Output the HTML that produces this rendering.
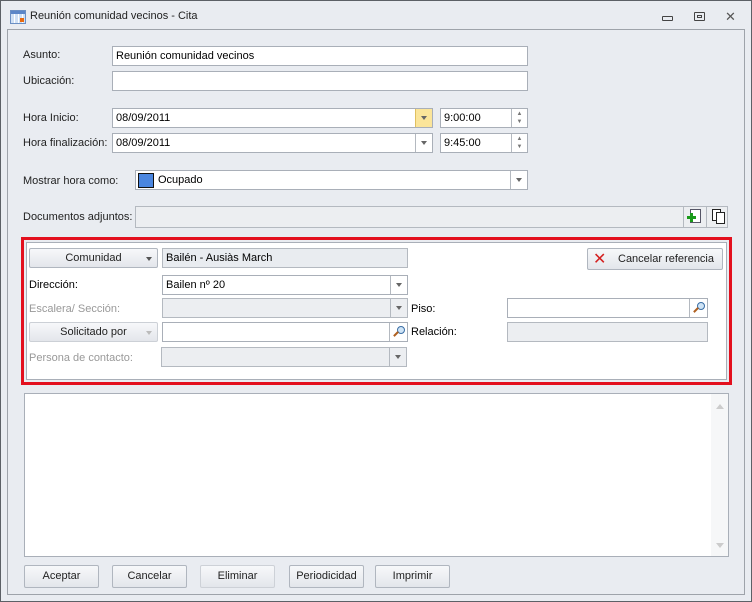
<!DOCTYPE html>
<html><head><meta charset="utf-8"><style>
*{box-sizing:border-box;margin:0;padding:0}
body{width:752px;height:602px;position:relative;overflow:hidden;background:#e9ecf1;font-family:"Liberation Sans",sans-serif;font-size:11px;color:#222}
.a{position:absolute}
.in{position:absolute;background:#fff;border:1px solid #a9afb8;height:20px;padding-left:3px;line-height:18px;color:#000}
.dis{background:#eceef1;border-color:#b4b9c0}
.dd{position:absolute;top:0;right:0;width:17px;height:18px;border-left:1px solid #b4b9c0}
.dd:after{content:"";position:absolute;left:5px;top:7px;border:3.5px solid transparent;border-top:4px solid #666}
.sr{position:absolute;top:0;right:0;width:18px;height:18px;border-left:1px solid #b4b9c0}
.sr:before{content:"";position:absolute;left:7px;top:3px;width:6px;height:6px;border:1px solid #3a6ea5;border-radius:50%;background:#cfe4f6}
.sr:after{content:"";position:absolute;left:3px;top:10px;width:6px;height:2px;background:#b06020;transform:rotate(-45deg)}
.lbl{position:absolute;color:#222}
.g{color:#999}
.btn{position:absolute;border:1px solid #b0b6bf;border-radius:2px;background:linear-gradient(#f7f8fa,#e3e6eb);text-align:center;line-height:21px;color:#222}
.spin{position:absolute;right:0;top:0;width:16px;height:18px;border-left:1px solid #b4b9c0;font-size:6px;line-height:8px;text-align:center;color:#777;padding-top:1px}
</style></head><body>
<div class="a" style="left:0;top:0;width:752px;height:602px;border:1px solid #5c6066"></div>
<div class="a" style="left:10px;top:10px;width:16px;height:14px;border:1px solid #6b8fc4;background:repeating-linear-gradient(90deg,#cfe0f5 0 3px,#fff 3px 4px)"><div class="a" style="left:0;top:0;width:14px;height:3px;background:#5b86c8"></div><div class="a" style="left:9px;top:7px;width:4px;height:4px;background:#e86a10"></div></div>
<div class="lbl" style="left:30px;top:10px">Reunión comunidad vecinos - Cita</div>
<div class="a" style="left:662px;top:16px;width:11px;height:5px;border:1px solid #444;border-radius:1px"></div>
<div class="a" style="left:694px;top:12px;width:11px;height:9px;border:1px solid #444;border-radius:1px"><div class="a" style="left:2px;top:2px;width:5px;height:3px;border:1px solid #444"></div></div>
<div class="lbl" style="left:725px;top:9px;font-size:13px;color:#555">✕</div>
<div class="a" style="left:7px;top:29px;width:738px;height:566px;border:1px solid #9ea3aa"></div>

<div class="lbl" style="left:23px;top:49px">Asunto:</div>
<div class="in" style="left:112px;top:46px;width:416px">Reunión comunidad vecinos</div>
<div class="lbl" style="left:23px;top:75px">Ubicación:</div>
<div class="in" style="left:112px;top:71px;width:416px"></div>

<div class="lbl" style="left:23px;top:112px">Hora Inicio:</div>
<div class="in" style="left:112px;top:108px;width:321px">08/09/2011<div class="dd" style="background:#fbe59a;border-left-color:#e0c060"></div></div>
<div class="in" style="left:440px;top:108px;width:88px">9:00:00<div class="spin">▲<br>▼</div></div>
<div class="lbl" style="left:23px;top:137px">Hora finalización:</div>
<div class="in" style="left:112px;top:133px;width:321px">08/09/2011<div class="dd"></div></div>
<div class="in" style="left:440px;top:133px;width:88px">9:45:00<div class="spin">▲<br>▼</div></div>

<div class="lbl" style="left:23px;top:175px">Mostrar hora como:</div>
<div class="in" style="left:135px;top:170px;width:393px;padding-left:22px">Ocupado<div class="a" style="left:2px;top:2px;width:16px;height:15px;background:#4a86e0;border:1px solid #111"></div><div class="dd"></div></div>

<div class="lbl" style="left:23px;top:211px">Documentos adjuntos:</div>
<div class="in dis" style="left:135px;top:206px;width:593px;height:22px"></div>
<div class="a" style="left:683px;top:207px;width:22px;height:20px;border-left:1px solid #b4b9c0"><div class="a" style="left:6px;top:2px;width:11px;height:14px;border:1px solid #556;background:#fff"></div><div class="a" style="left:3px;top:9px;width:9px;height:3px;background:#1a9a1a"></div><div class="a" style="left:6px;top:6px;width:3px;height:9px;background:#1a9a1a"></div></div>
<div class="a" style="left:706px;top:207px;width:22px;height:20px;border-left:1px solid #b4b9c0"><div class="a" style="left:5px;top:2px;width:9px;height:12px;border:1px solid #222;background:#fff"></div><div class="a" style="left:9px;top:5px;width:9px;height:12px;border:1px solid #222;background:#fff"></div></div>

<div class="a" style="left:21px;top:237px;width:711px;height:148px;border:3px solid #e3101e"></div>
<div class="a" style="left:26px;top:242px;width:701px;height:138px;background:#fff;border:1px solid #a9afb8"></div>

<div class="btn" style="left:29px;top:248px;width:129px;height:20px;line-height:18px">Comunidad<span class="a" style="right:5px;top:8px;border:3.5px solid transparent;border-top:4px solid #555"></span></div>
<div class="in dis" style="left:162px;top:248px;width:246px;background:#e9ecf0">Bailén - Ausiàs March</div>
<div class="btn" style="left:587px;top:248px;width:136px;height:22px;padding-left:22px;line-height:20px">Cancelar referencia<span class="a" style="left:5px;top:1px;color:#d42020;font-size:16px">✕</span></div>

<div class="lbl" style="left:29px;top:279px;color:#000">Dirección:</div>
<div class="in" style="left:162px;top:275px;width:246px">Bailen nº 20<div class="dd"></div></div>
<div class="lbl g" style="left:29px;top:303px">Escalera/ Sección:</div>
<div class="in dis" style="left:162px;top:298px;width:246px"><div class="dd"></div></div>
<div class="lbl" style="left:411px;top:303px;color:#000">Piso:</div>
<div class="in" style="left:507px;top:298px;width:201px"><div class="sr"></div></div>

<div class="btn g" style="left:29px;top:322px;width:129px;height:20px;line-height:18px;border-color:#ccd0d6">Solicitado por<span class="a" style="right:5px;top:8px;border:3.5px solid transparent;border-top:4px solid #bbb"></span></div>
<div class="in" style="left:162px;top:322px;width:246px"><div class="sr"></div></div>
<div class="lbl" style="left:411px;top:326px;color:#000">Relación:</div>
<div class="in dis" style="left:507px;top:322px;width:201px"></div>

<div class="lbl g" style="left:29px;top:352px">Persona de contacto:</div>
<div class="in dis" style="left:161px;top:347px;width:246px"><div class="dd"></div></div>

<div class="in" style="left:24px;top:393px;width:705px;height:164px"><div class="a" style="right:0;top:0;width:17px;height:162px;background:#f6f7f8"></div><div class="a" style="right:4px;top:6px;border:4px solid transparent;border-bottom:5px solid #ccc"></div><div class="a" style="right:4px;bottom:4px;border:4px solid transparent;border-top:5px solid #ccc"></div></div>

<div class="btn" style="left:24px;top:565px;width:75px;height:23px">Aceptar</div>
<div class="btn" style="left:112px;top:565px;width:75px;height:23px">Cancelar</div>
<div class="btn g" style="left:200px;top:565px;width:75px;height:23px;border-color:#cdd1d7">Eliminar</div>
<div class="btn" style="left:289px;top:565px;width:75px;height:23px">Periodicidad</div>
<div class="btn" style="left:375px;top:565px;width:75px;height:23px">Imprimir</div>
</body></html>
